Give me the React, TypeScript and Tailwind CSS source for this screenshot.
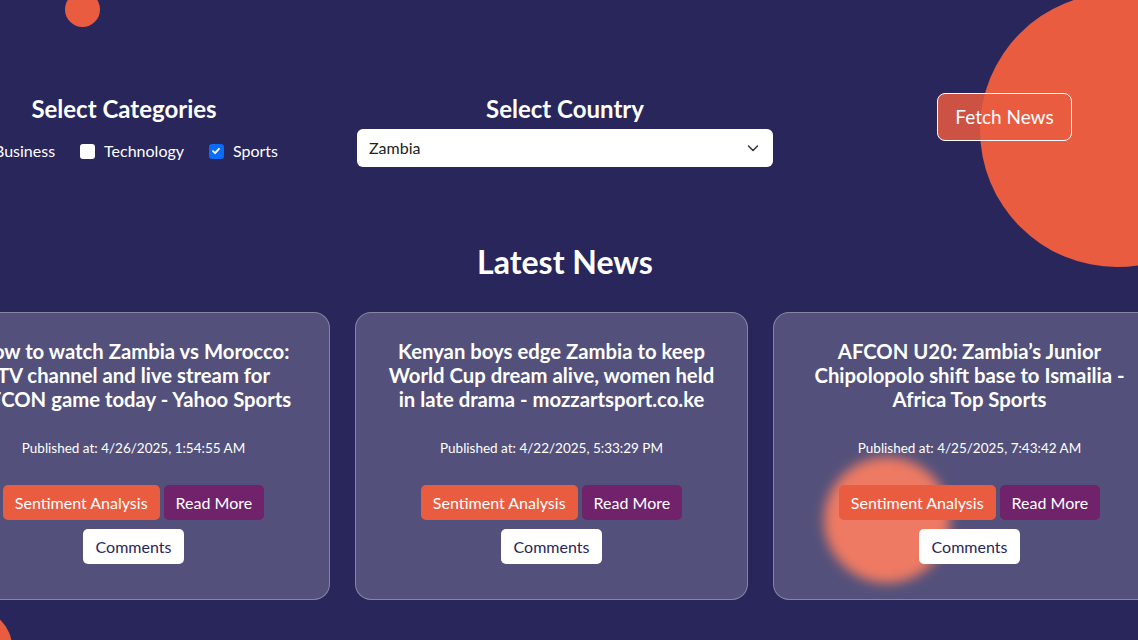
import React from "react";

const cards = [
  {
    title: "How to watch Zambia vs Morocco: TV channel and live stream for AFCON game today - Yahoo Sports",
    date: "4/26/2025, 1:54:55 AM",
  },
  {
    title: "Kenyan boys edge Zambia to keep World Cup dream alive, women held in late drama - mozzartsport.co.ke",
    date: "4/22/2025, 5:33:29 PM",
  },
  {
    title: "AFCON U20: Zambia\u2019s Junior Chipolopolo shift base to Ismailia - Africa Top Sports",
    date: "4/25/2025, 7:43:42 AM",
  },
];

function Check({ checked, label }: { checked?: boolean; label: string }) {
  return (
    <label className="flex items-center gap-[9px]">
      <span
        className={
          checked
            ? "flex h-[15px] w-[15px] items-center justify-center rounded-[3px] bg-[#0b6cf5]"
            : "h-[15px] w-[15px] rounded-[3px] bg-white"
        }
      >
        {checked && (
          <svg width="10" height="10" viewBox="0 0 10 10">
            <path d="M2 5.2 L4.1 7.2 L8 2.8" fill="none" stroke="white" strokeWidth="1.8" strokeLinecap="round" strokeLinejoin="round" />
          </svg>
        )}
      </span>
      <span className="text-[16px] text-white">{label}</span>
    </label>
  );
}

function Card({ title, date, blob }: { title: string; date: string; blob?: boolean }) {
  return (
    <div className="relative h-[288px] w-[393px] shrink-0 overflow-hidden rounded-[16px] border border-white/30 bg-white/20 px-[26px] pt-[26px] text-center">
      {blob && (
        <div className="absolute left-[50px] top-[144px] h-[126px] w-[126px] rounded-full bg-[#ee7a63] blur-[6px]" />
      )}
      <div className="relative">
        <h3 className="text-[20.3px] font-bold leading-[24px] text-white">{title}</h3>
        <p className="mt-[29px] text-[13.5px] leading-[16px] text-white">Published at: {date}</p>
        <div className="mt-[29px] flex justify-center gap-[4px]">
          <button className="h-[35px] rounded-[5px] bg-[#e95c40] px-[12px] text-[16px] text-white">Sentiment Analysis</button>
          <button className="h-[35px] rounded-[5px] bg-[#70226a] px-[12px] text-[16px] text-white">Read More</button>
        </div>
        <div className="mt-[9px] flex justify-center">
          <button className="h-[35px] rounded-[5px] bg-white px-[13px] text-[16px] text-[#28265a]">Comments</button>
        </div>
      </div>
    </div>
  );
}

export default function App() {
  return (
    <div
      className="relative h-[640px] w-[1138px] overflow-hidden bg-[#28265a]"
      style={{ fontFamily: "Lato, 'Noto Sans', sans-serif" }}
    >
      {/* decorative circles */}
      <div className="absolute left-[65px] top-[-8px] h-[35px] w-[35px] rounded-full bg-[#e95c40]" />
      <div className="absolute left-[980px] top-[-7px] h-[274px] w-[274px] rounded-full bg-[#e95c40]" />
      <div className="absolute left-[-62px] top-[610px] h-[74px] w-[74px] rounded-full bg-[#e95c40]" />

      <div className="relative flex flex-col">
        <div className="flex items-start pt-[94px]">
          <div className="ml-[-29px] flex w-[306px] flex-col items-center">
            <h2 className="text-[24px] font-bold leading-[29px] text-white">Select Categories</h2>
            <div className="mt-[16px] flex items-center gap-[25px]">
              <Check label="Business" />
              <Check label="Technology" />
              <Check checked label="Sports" />
            </div>
          </div>
          <div className="ml-[80px] flex w-[416px] flex-col items-center">
            <h2 className="text-[24px] font-bold leading-[29px] text-white">Select Country</h2>
            <div className="mt-[6px] flex h-[38px] w-full items-center justify-between rounded-[6px] bg-white pl-[12px] pr-[13px] text-[16px] text-[#222]">
              <span>Zambia</span>
              <svg width="14" height="14" viewBox="0 0 14 14">
                <path d="M2.5 5 L7 9.5 L11.5 5" fill="none" stroke="#333" strokeWidth="1.5" strokeLinecap="round" strokeLinejoin="round" />
              </svg>
            </div>
          </div>
          <button className="ml-[164px] mt-[-1px] h-[48px] w-[135px] rounded-[8px] border border-white bg-[#e95c40]/85 text-[19px] text-white">
            Fetch News
          </button>
        </div>

        <h2 className="mt-[76px] pr-[8px] text-center text-[32px] font-bold leading-[38px] text-white">Latest News</h2>

        <div className="ml-[-63px] mt-[31px] flex gap-[25px]">
          <Card title={cards[0].title} date={cards[0].date} />
          <Card title={cards[1].title} date={cards[1].date} />
          <Card title={cards[2].title} date={cards[2].date} blob />
        </div>
      </div>
    </div>
  );
}
